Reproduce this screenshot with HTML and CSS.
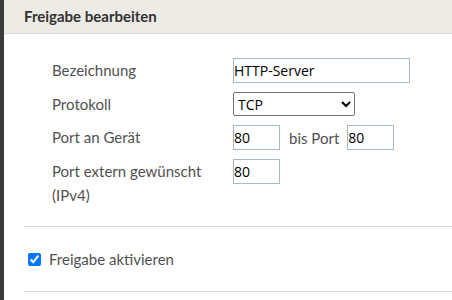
FILE: index.html
```html
<!DOCTYPE html>
<html lang="de">
<head>
  <meta charset="UTF-8" />
  <meta name="viewport" content="width=device-width, initial-scale=1.0"/>
  <title>Freigabe bearbeiten</title>
  <link rel="stylesheet" href="styles.css">
</head>
<body>
  <div class="dialog">
    <div class="dialog-header">Freigabe bearbeiten</div>

    <div class="form-grid">
      <label class="label" for="name">Bezeichnung</label>
      <div class="field"><input class="input wide" id="name" type="text" value="HTTP-Server"></div>

      <label class="label" for="proto">Protokoll</label>
      <div class="field">
        <select class="select" id="proto">
          <option>TCP</option>
          <option>UDP</option>
        </select>
      </div>

      <label class="label" for="port">Port an Gerät</label>
      <div class="field">
        <input class="input short" id="port" type="text" value="80">
        <span class="between">bis Port</span>
        <input class="input short" type="text" value="80">
      </div>

      <label class="label" for="ext">Port extern gewünscht (IPv4)</label>
      <div class="field"><input class="input short" id="ext" type="text" value="80"></div>
    </div>

    <div class="separator"></div>

    <div class="check-row">
      <input type="checkbox" id="active" checked>
      <label for="active">Freigabe aktivieren</label>
    </div>

    <div class="separator"></div>
  </div>
</body>
</html>
```

FILE: styles.css
```css
body {
  margin: 0;
  background-color: #3b3b3b;
  font-family: 'Lato', 'Open Sans', sans-serif;
  height: 300px;
  overflow: hidden;
}

.dialog {
  margin-left: 4px;
  background-color: #fff;
  min-height: 300px;
}

.dialog-header {
  height: 33px;
  line-height: 33px;
  padding-left: 20px;
  background-color: #ecebe5;
  border-bottom: 1px solid #d6d6d6;
  color: #333;
  font-size: 15px;
  font-weight: 700;
}

.form-grid {
  display: grid;
  grid-template-columns: 181px 1fr;
  row-gap: 9px;
  padding: 24px 0 19px 48px;
}

.label {
  color: #505050;
  font-size: 15px;
  line-height: 24px;
  padding-right: 10px;
}

.field {
  display: flex;
  align-items: center;
  align-self: start;
}

.input {
  box-sizing: border-box;
  height: 25px;
  border: 1px solid #a9b8c2;
  padding: 0;
  font-family: 'Open Sans', sans-serif;
  font-size: 14px;
  color: #000;
  outline: none;
}

.input.wide {
  width: 177px;
}

.input.short {
  width: 47px;
}

.between {
  color: #505050;
  font-size: 15px;
  margin: 0 8px 0 9px;
}

.select {
  box-sizing: border-box;
  width: 122px;
  height: 24px;
  border: 1px solid #767676;
  border-radius: 2px;
  background-color: #fff;
  font-family: 'Open Sans', sans-serif;
  font-size: 14px;
  color: #000;
  padding: 0;
}

.separator {
  margin-left: 20px;
  border-top: 1px solid #d6d6d6;
}

.check-row {
  display: flex;
  align-items: center;
  height: 64px;
  padding-left: 20px;
  color: #505050;
  font-size: 15px;
}

.check-row input {
  width: 13px;
  height: 13px;
  margin: 0 8px 0 4px;
}
```
